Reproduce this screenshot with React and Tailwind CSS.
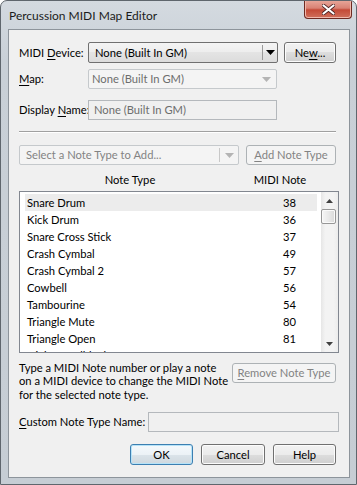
import React from 'react';

function Tri({ color = '#000', w = 9, h = 5, up = false }) {
  return (
    <svg width={w} height={h} viewBox={`0 0 ${w} ${h}`} className="block">
      <path d={up ? `M0 ${h}H${w}L${w / 2} 0Z` : `M0 0H${w}L${w / 2} ${h}Z`} fill={color} />
    </svg>
  );
}

function Btn({ children, className = '', kind = 'normal' }) {
  const styles =
    kind === 'disabled'
      ? 'border-[#adb2b5] bg-[#f4f4f4] text-[#838383]'
      : kind === 'default'
      ? 'border-[#3c7fb1] bg-[linear-gradient(#f4f9fc_0%,#ecf2f6_50%,#dbe4ea_50%,#cfd8de_100%)] text-black shadow-[inset_0_0_0_1px_#b6e3f8]'
      : 'border-[#707070] bg-[linear-gradient(#f2f2f2_0%,#ebebeb_50%,#dddddd_50%,#cfcfcf_100%)] text-black shadow-[inset_0_0_0_1px_#fcfcfc]';
  return (
    <div className={`flex shrink-0 items-center justify-center rounded-[3px] border ${styles} ${className}`}>
      {children}
    </div>
  );
}

const rows = [
  ['Snare Drum', '38'],
  ['Kick Drum', '36'],
  ['Snare Cross Stick', '37'],
  ['Crash Cymbal', '49'],
  ['Crash Cymbal 2', '57'],
  ['Cowbell', '56'],
  ['Tambourine', '54'],
  ['Triangle Mute', '80'],
  ['Triangle Open', '81'],
  ['High Woodblock', '76'],
];

export default function App() {
  return (
    <div className="w-[357px] h-[485px] overflow-hidden whitespace-nowrap rounded-t-[7px] border border-[#5f666d] bg-[linear-gradient(180deg,#d4dae0_0%,#c9d0d7_60px,#c6cdd4_100%)] font-['Lato',sans-serif] text-[11.2px] leading-[14px] text-black">
      {/* title bar */}
      <div className="flex h-[28px] justify-between pl-[8px] pr-[4px]">
        <div className="flex items-center pt-[1px] text-[12px] text-[#1c1c1c]">Percussion MIDI Map Editor</div>
        <div className="-mt-px flex h-[19px] w-[48px] items-center justify-center rounded-b-[4px] border border-t-0 border-[#6e2a22] bg-[linear-gradient(180deg,#e9a99c_0%,#d98274_45%,#c44a37_55%,#d0705c_100%)] shadow-[inset_0_0_0_1px_#f0b8ac]">
          <svg width="13" height="11" viewBox="0 0 13 11" className="block">
            <path d="M1.5 1.5L11.5 9.5M11.5 1.5L1.5 9.5" stroke="#4a2020" strokeWidth="3.6" strokeLinecap="round" />
            <path d="M1.5 1.5L11.5 9.5M11.5 1.5L1.5 9.5" stroke="#ffffff" strokeWidth="2.2" strokeLinecap="round" />
          </svg>
        </div>
      </div>

      {/* client area */}
      <div className="ml-[7px] flex h-[449px] w-[342px] flex-col border border-[#8d949b] bg-[#f0f0f0] pl-[10px]">
        {/* MIDI Device */}
        <div className="mt-[12px] flex h-[21px] items-center">
          <div className="w-[69px]">
            MIDI <span className="underline underline-offset-2">D</span>evice:
          </div>
          <div className="flex h-full w-[190px] items-center rounded-[2px] border border-[#707070] bg-[linear-gradient(#f4f4f4_0%,#ededed_50%,#e4e4e4_50%,#dcdcdc_100%)]">
            <div className="flex-1 pl-[6px]">None (Built In GM)</div>
            <div className="h-[15px] w-px bg-[#9a9a9a]" />
            <div className="flex w-[14px] justify-center">
              <Tri w={9} h={5} />
            </div>
          </div>
          <Btn className="ml-[6px] h-full w-[52px]">
            <span>
              Ne<span className="underline underline-offset-2">w</span>...
            </span>
          </Btn>
        </div>

        {/* Map */}
        <div className="mt-[6px] flex h-[20px] items-center">
          <div className="w-[69px]">
            <span className="underline underline-offset-2">M</span>ap:
          </div>
          <div className="flex h-full w-[189px] items-center rounded-[2px] border border-[#c5c9cc] bg-[#f4f4f4] text-[#6d6d6d]">
            <div className="flex-1 pl-[3px]">None (Built In GM)</div>
            <div className="flex w-[20px] justify-center">
              <Tri w={9} h={5} color="#b4b4b4" />
            </div>
          </div>
        </div>

        {/* Display Name */}
        <div className="mt-[11px] flex h-[20px] items-center">
          <div className="w-[69px]">
            Display <span className="underline underline-offset-2">N</span>ame:
          </div>
          <div className="flex h-full w-[189px] items-center border border-[#b4b8bc] bg-[#f0f0f0] pl-[5px] text-[#6d6d6d]">
            None (Built In GM)
          </div>
        </div>

        {/* separator */}
        <div className="mt-[11px] w-[317px]">
          <div className="h-px bg-[#a0a0a0]" />
          <div className="h-px bg-white" />
        </div>

        {/* note type add row */}
        <div className="mt-[12px] flex h-[20px] items-center">
          <div className="flex h-full w-[220px] items-center rounded-[2px] border border-[#c5c9cc] bg-[#f4f4f4] text-[#838383]">
            <div className="flex-1 pl-[6px]">Select a Note Type to Add...</div>
            <div className="h-[14px] w-px bg-[#c8c8c8]" />
            <div className="flex w-[18px] justify-center">
              <Tri w={9} h={5} color="#b4b4b4" />
            </div>
          </div>
          <Btn kind="disabled" className="ml-[7px] h-full w-[90px]">
            <span>
              <span className="underline underline-offset-2">A</span>dd Note Type
            </span>
          </Btn>
        </div>

        {/* headers */}
        <div className="mt-[6px] flex h-[18px] items-center">
          <div className="w-[222px] text-center">Note Type</div>
          <div className="w-[78px] text-center">MIDI Note</div>
        </div>

        {/* list */}
        <div className="mt-[2px] flex h-[162px] w-[320px] border border-[#828790] bg-white">
          <div className="flex-1 overflow-hidden pl-[5px] pr-[4px] pt-[2px]">
            {rows.map(([name, n], i) => (
              <div
                key={name}
                className={`flex h-[17px] items-center justify-between pl-[2px] pr-[21px] ${i === 0 ? 'bg-[#ececec]' : ''}`}
              >
                <span>{name}</span>
                <span>{n}</span>
              </div>
            ))}
          </div>
          <div className="flex w-[17px] flex-col bg-[linear-gradient(90deg,#e6e6e6_0%,#f3f3f3_25%,#f3f3f3_75%,#ececec_100%)]">
            <div className="flex h-[17px] items-center justify-center">
              <Tri up w={7} h={4} color="#404040" />
            </div>
            <div className="h-[15px] w-[15px] rounded-[2px] border border-[#979797] bg-[linear-gradient(90deg,#f6f6f6_0%,#e9e9e9_50%,#d9d9d9_100%)] shadow-[inset_0_0_0_1px_#fafafa]" />
            <div className="flex-1" />
            <div className="flex h-[17px] items-center justify-center">
              <Tri w={7} h={4} color="#404040" />
            </div>
          </div>
        </div>

        {/* help text + remove */}
        <div className="mt-[8px] flex items-start">
          <div className="w-[213px] leading-[13.4px]">
            Type a MIDI Note number or play a note
            <br />
            on a MIDI device to change the MIDI Note
            <br />
            for the selected note type.
          </div>
          <Btn kind="disabled" className="mt-[2px] h-[20px] w-[104px]">
            <span>
              <span className="underline underline-offset-2">R</span>emove Note Type
            </span>
          </Btn>
        </div>

        {/* custom name */}
        <div className="mt-[11px] flex h-[20px] items-center">
          <div className="w-[129px]">
            <span className="underline underline-offset-2">C</span>ustom Note Type Name:
          </div>
          <div className="h-full w-[191px] border border-[#b4b8bc] bg-[#f0f0f0]" />
        </div>

        {/* buttons */}
        <div className="mt-[12px] flex h-[21px] pl-[111px]">
          <Btn kind="default" className="h-full w-[63px]">OK</Btn>
          <Btn className="ml-[8px] h-full w-[64px]">Cancel</Btn>
          <Btn className="ml-[8px] h-full w-[63px]">Help</Btn>
        </div>
      </div>
    </div>
  );
}
